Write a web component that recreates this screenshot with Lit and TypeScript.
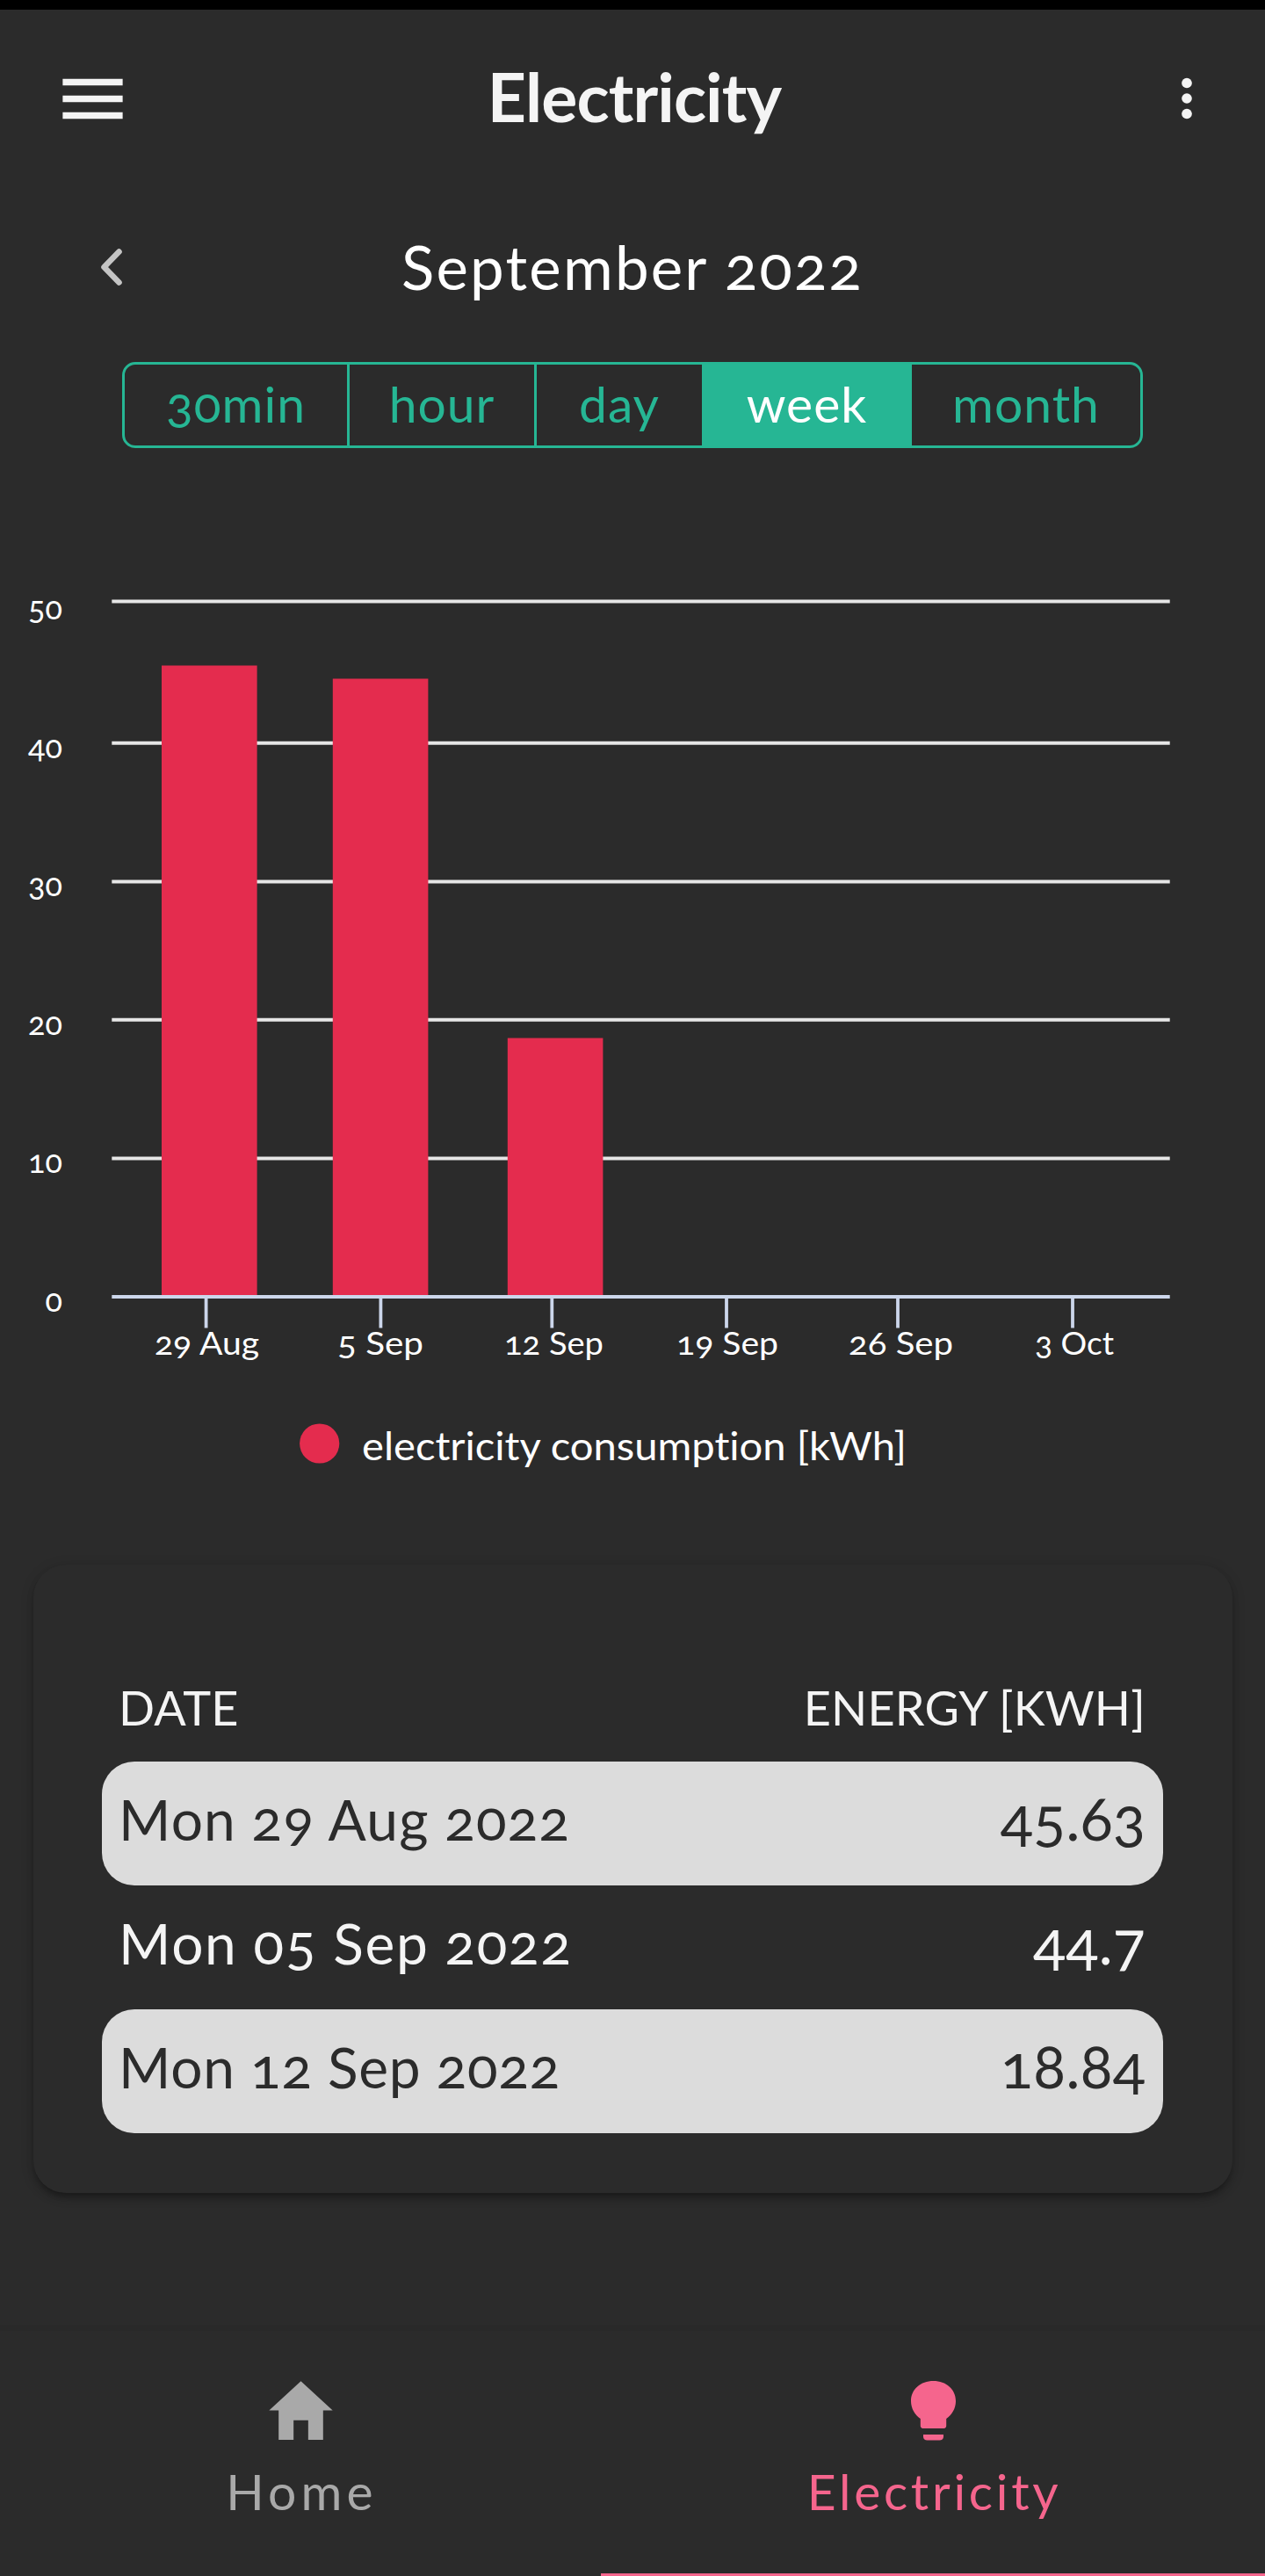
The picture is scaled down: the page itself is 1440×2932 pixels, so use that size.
import { LitElement, html, svg, css } from "lit";
import { customElement, state } from "lit/decorators.js";
import { classMap } from "lit/directives/class-map.js";

const RANGES = ["30min", "hour", "day", "week", "month"];

const GRID = [
  { label: "50", y: 684.5, base: 705 },
  { label: "40", y: 845.8, base: 863 },
  { label: "30", y: 1003.6, base: 1020 },
  { label: "20", y: 1160.8, base: 1178 },
  { label: "10", y: 1318.5, base: 1335 },
];

const WEEKS = [
  { label: "29 Aug", tick: 234.6, x: 176, w: 119 },
  { label: "5 Sep", tick: 433.4, x: 384, w: 98 },
  { label: "12 Sep", tick: 628.3, x: 574, w: 113 },
  { label: "19 Sep", tick: 827, x: 770, w: 116 },
  { label: "26 Sep", tick: 1022, x: 966, w: 119 },
  { label: "3 Oct", tick: 1221, x: 1178, w: 90 },
];

const BARS = [
  { x: 184, top: 757.5 },
  { x: 378.8, top: 772.5 },
  { x: 577.8, top: 1181.5 },
];

const ROWS = [
  { date: "Mon 29 Aug 2022", value: "45.63" },
  { date: "Mon 05 Sep 2022", value: "44.7" },
  { date: "Mon 12 Sep 2022", value: "18.84" },
];

@customElement("app-root")
export class AppRoot extends LitElement {
  @state() private range = "week";

  static styles = css`
    :host {
      display: block;
      width: 1440px;
      height: 2932px;
      overflow: hidden;
      background: #2b2b2b;
      color: #fff;
      font-family: Lato, "Liberation Sans", sans-serif;
      font-variant-numeric: oldstyle-nums;
      font-variant-ligatures: none;
    }
    * { box-sizing: border-box; }
    .page { display: flex; flex-direction: column; height: 2932px; white-space: nowrap; }
    .status { height: 11px; background: #000; }
    .bar {
      height: 202px;
      display: grid;
      grid-template-columns: 210px 1fr 178px;
      align-items: center;
      color: #f4f4f4;
    }
    .icon { display: block; fill: currentColor; justify-self: center; }
    .title {
      margin: 0;
      padding: 0 28px 7px 0;
      text-align: center;
      font-size: 77px;
      line-height: 92px;
      font-weight: 700;
      letter-spacing: -0.9px;
    }
    .month {
      height: 199px;
      display: grid;
      grid-template-columns: 254px 1fr 254px;
      align-items: center;
      padding-bottom: 18px;
    }
    .month-name { text-align: center; font-size: 69px; line-height: 84px; letter-spacing: 2.2px; }
    .chev { stroke: #c4c4c4; fill: none; stroke-width: 6.6; stroke-linecap: round; stroke-linejoin: round; }
    .segments {
      align-self: center;
      display: grid;
      grid-template-columns: 256px 213px 191px 236px 260px;
      width: 1162px;
      height: 98px;
      border: 3px solid #26b694;
      border-radius: 15px;
      overflow: hidden;
    }
    .segment {
      border: 0;
      border-right: 3px solid #26b694;
      background: none;
      color: #26b694;
      font: inherit;
      font-variant-numeric: oldstyle-nums;
      font-size: 57px;
      line-height: 68px;
      letter-spacing: 1px;
      padding: 0 0 5px;
    }
    .segment:last-child { border-right: 0; }
    .segment.on { background: #26b694; color: #fff; }
    .chart { display: block; margin-top: 130px; flex: none; }
    .chart text { fill: #fff; }
    .card {
      margin: 61px 37px 0 38px;
      height: 715px;
      padding: 118px 79px 0 78px;
      border-radius: 37px;
      background: #2b2b2b;
      box-shadow: 0 6px 8px -2px rgba(0, 0, 0, 0.36), 0 3px 16px rgba(0, 0, 0, 0.14);
    }
    .row {
      display: flex;
      justify-content: space-between;
      align-items: center;
      height: 141px;
      padding: 0 20px 0 19px;
      border-radius: 37px;
      color: #f4f4f4;
    }
    .row.head { height: 106px; font-size: 54px; padding-bottom: 17px; letter-spacing: 0.2px; }
    .row.shade { background: #dcdcdc; color: #2b2b2b; }
    .date { font-size: 64px; line-height: 78px; padding-bottom: 9px; letter-spacing: 1.2px; }
    .row:nth-child(3) .date { letter-spacing: 1.7px; }
    .row:nth-child(4) .date { letter-spacing: 0.8px; }
    .value { font-size: 69px; line-height: 84px; padding-bottom: 14px; }
    .tabs {
      margin-top: 150px;
      height: 286px;
      border-top: 7px solid #292929;
      display: grid;
      grid-template-columns: 684px 756px;
      color: #a9a9a9;
    }
    .tab { display: flex; flex-direction: column; align-items: center; padding-top: 46px; font-size: 57px; letter-spacing: 5.2px; }
    .tab.on { color: #f5658d; border-bottom: 3px solid #f5658d; letter-spacing: 3.7px; }
    .tab-label { line-height: 68px; margin-top: 13px; margin-right: -3px; }
  `;

  private chart() {
    return html`<svg class="chart" width="1440" height="1080" viewBox="0 640 1440 1080">
      ${GRID.map(
        (g) => svg`<line x1="127.3" x2="1331.7" y1=${g.y} y2=${g.y} stroke="#e6e6e6" stroke-width="4"></line>
          <text x="71" y=${g.base} text-anchor="end" font-size="36">${g.label}</text>`
      )}
      <text x="71" y="1493" text-anchor="end" font-size="36">0</text>
      ${BARS.map(
        (b) => svg`<rect x=${b.x} y=${b.top} width="108.6" height=${1475 - b.top} fill="#e42c4e"></rect>`
      )}
      <path d="M127.3 1476H1331.7" stroke="#ccd6eb" stroke-width="4"></path>
      ${WEEKS.map(
        (w) => svg`<path d="M${w.tick} 1478V1511.5" stroke="#ccd6eb" stroke-width="3.8"></path>
          <text x=${w.x} y="1542" font-size="36" textLength=${w.w} lengthAdjust="spacingAndGlyphs">${w.label}</text>`
      )}
      <circle cx="363.7" cy="1643" r="22.6" fill="#e42c4e"></circle>
      <text x="412" y="1662" font-size="45" textLength="620" lengthAdjust="spacingAndGlyphs">electricity consumption [kWh]</text>
    </svg>`;
  }

  render() {
    return html`<div class="page">
      <div class="status"></div>
      <header class="bar">
        <svg class="icon" width="91" height="91" viewBox="0 0 24 24">
          <path d="M3 6h18v2H3zM3 11h18v2H3zM3 16h18v2H3z"></path>
        </svg>
        <h1 class="title">Electricity</h1>
        <svg class="icon" width="70" height="70" viewBox="0 0 24 24">
          <circle cx="12" cy="6" r="2"></circle>
          <circle cx="12" cy="12" r="2"></circle>
          <circle cx="12" cy="18" r="2"></circle>
        </svg>
      </header>
      <section class="month">
        <svg class="icon chev" width="40" height="56" viewBox="0 0 40 56">
          <path d="M28.5 10.5L11.5 28L28.5 45.5"></path>
        </svg>
        <div class="month-name">September 2022</div>
      </section>
      <div class="segments">
        ${RANGES.map(
          (r) => html`<button
            class=${classMap({ segment: true, on: r === this.range })}
            @click=${() => (this.range = r)}
          >${r}</button>`
        )}
      </div>
      ${this.chart()}
      <section class="card">
        <div class="row head"><span>DATE</span><span>ENERGY [KWH]</span></div>
        ${ROWS.map(
          (r, i) => html`<div class=${classMap({ row: true, shade: i % 2 === 0 })}>
            <span class="date">${r.date}</span><span class="value">${r.value}</span>
          </div>`
        )}
      </section>
      <nav class="tabs">
        <div class="tab">
          <svg class="icon" width="89" height="89" viewBox="0 0 512 512">
            <path d="M208 448V320h96v128h97.6V256H464L256 64 48 256h62.4v192z"></path>
          </svg>
          <span class="tab-label">Home</span>
        </div>
        <div class="tab on">
          <svg class="icon" width="89" height="89" viewBox="0 0 89 89">
            <path d="M44.5 11.1C30 11.1 19 20.5 19 34c0 8.5 4.5 15.500 10.800 20v8c0 1.800 1 2.900 2.800 2.900h23.800c1.800 0 2.800-1.100 2.800-2.900v-8C65.500 49.500 70 42.500 70 34 70 20.500 59 11.100 44.500 11.100zM33 72h23v2.500c0 2.500-2 4-4.500 4h-14c-2.500 0-4.500-1.500-4.500-4z"></path>
          </svg>
          <span class="tab-label">Electricity</span>
        </div>
      </nav>
    </div>`;
  }
}
